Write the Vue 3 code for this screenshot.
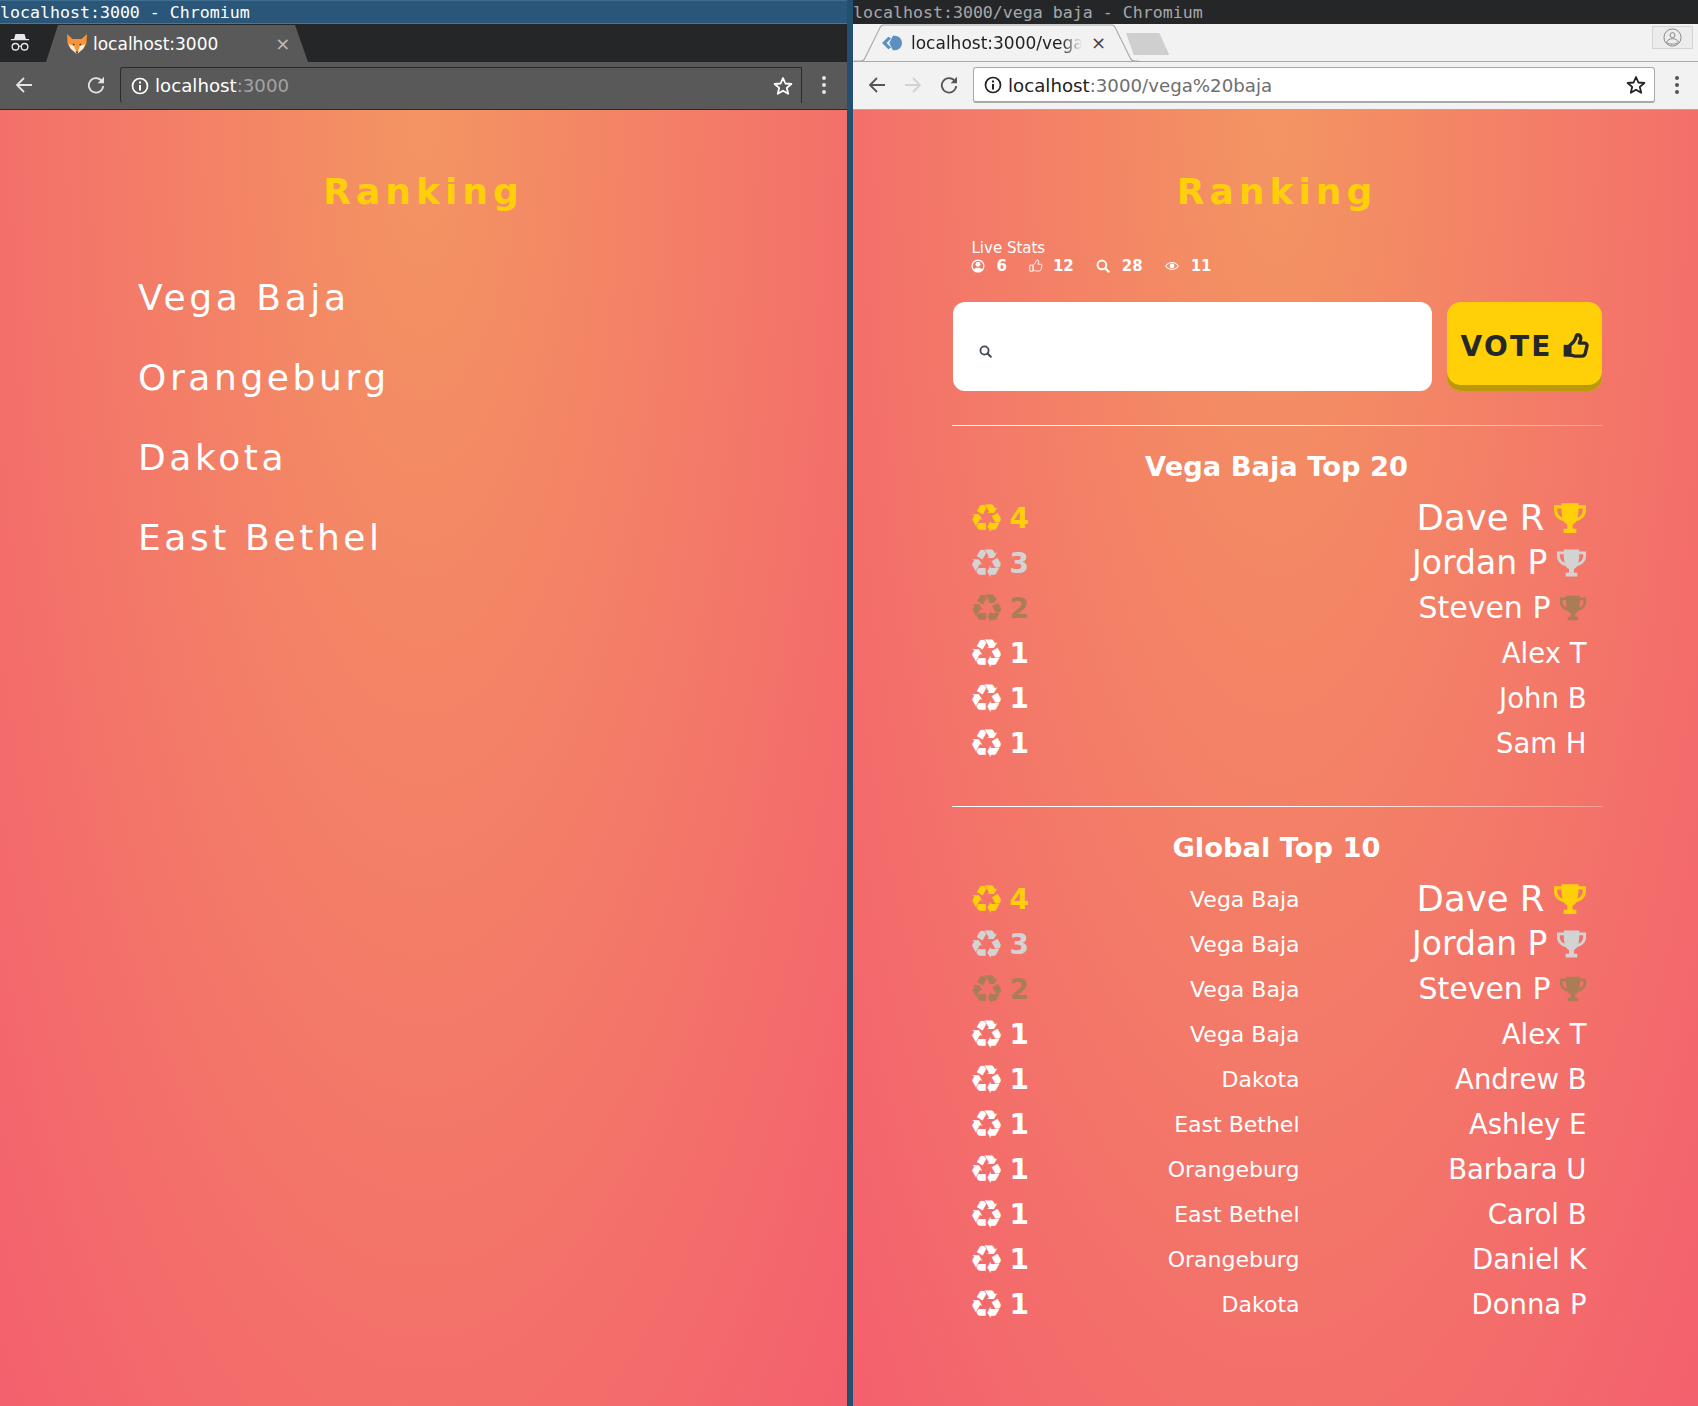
<template>
  <div class="screen">
    <svg class="defs" width="0" height="0">
      <defs>
        <symbol id="trophy" viewBox="0 0 32 28">
          <path fill-rule="evenodd" d="M8 0h16v2h7v5c0 5-4 9-9 10-1 1.500-2 2.500-3.500 3.200V24H22v4H10v-4h3.500v-3.800C12 19.500 11 18.500 10 17 5 16 1 12 1 7V2h7zM4 5v2c0 3 2 5.500 5 6.700C8.400 11.500 8 8.500 8 5zm24 0h-4c0 3.500-.4 6.500-1 8.700 3-1.200 5-3.700 5-6.700z" />
        </symbol>
        <symbol id="thumb" viewBox="0 0 24 24">
          <path fill="none" stroke="currentColor" stroke-linejoin="round" d="M7 11c2-1.500 4-3.500 5-6 .5-1.500.5-3.500 2-3.500 2 0 3 2 2.500 4l-1 3.500h4.500c1.500 0 2.500 1.200 2.200 2.500l-1.500 6.500c-.4 1.600-1.400 2.500-3 2.500h-6c-2 0-3-1-4.700-1z" />
          <path d="M1.500 10.500H7V21H1.500z" />
        </symbol>
        <symbol id="lens" viewBox="0 0 16 16">
          <circle cx="6.800" cy="6.800" r="5" fill="none" stroke="currentColor" stroke-width="2.200" />
          <path d="M10.500 10.500l4 4" stroke="currentColor" stroke-width="2.400" stroke-linecap="round" />
        </symbol>
        <symbol id="star" viewBox="0 0 20 20">
          <path fill="none" stroke="currentColor" stroke-width="1.800" stroke-linejoin="round" d="M10 2l2.400 5.500 6 .5-4.600 3.900 1.400 5.900L10 14.700 4.800 17.800l1.400-5.900L1.600 8l6-.5z" />
        </symbol>
        <symbol id="info" viewBox="0 0 18 18">
          <circle cx="9" cy="9" r="7.500" fill="none" stroke="currentColor" stroke-width="1.700" />
          <path fill="currentColor" d="M8 8h2v5.500H8zM8 4.500h2v2H8z" />
        </symbol>
        <symbol id="arrow" viewBox="0 0 18 18">
          <path fill="none" stroke="currentColor" stroke-width="1.800" d="M17 9H2M9 2 2 9l7 7" />
        </symbol>
        <symbol id="reload" viewBox="0 0 18 18">
          <path fill="none" stroke="currentColor" stroke-width="1.800" d="M14.800 5A7.200 7.200 0 1 0 16.200 10" />
          <path fill="currentColor" d="M17 .8v6.400h-6.400z" />
        </symbol>
      </defs>
    </svg>

    <section class="window dark">
      <div class="title-bar blue">localhost:3000 - Chromium</div>
      <div class="tab-strip">
        <svg class="incognito" viewBox="0 0 22 24">
          <path fill="#e6e6e6" d="M6 1h10l1.500 5.500H21v1.500H1V6.500h3.500z" />
          <circle cx="6" cy="15" r="3.600" fill="none" stroke="#e6e6e6" stroke-width="1.500" />
          <circle cx="16" cy="15" r="3.600" fill="none" stroke="#e6e6e6" stroke-width="1.500" />
          <path d="M9.500 14.500h3" stroke="#e6e6e6" stroke-width="1.300" />
        </svg>
        <div class="tab tab-dark">
          <svg class="favicon" viewBox="0 0 22 22">
            <path fill="#f7933a" d="M1 1l5.500 5h9L21 1l-.5 9-2.500 5-7 6-7-6-2.500-5z" />
            <path fill="#fdeeda" d="M2.500 11l5.500 2 3 8-6-5zM19.500 11 14 13l-3 8 6-5z" />
            <path fill="#40302a" d="M9.500 18.500h3L11 21zM6.500 10.500l2.500 1-1.500 1zM15.500 10.500l-2.500 1 1.500 1z" />
          </svg>
          <span class="tab-title">localhost:3000</span>
          <span class="tab-close">×</span>
        </div>
      </div>
      <div class="toolbar">
        <svg class="tool-icon"><use href="#arrow" /></svg>
        <span class="tool-gap"></span>
        <svg class="tool-icon"><use href="#reload" /></svg>
        <div class="omnibox">
          <svg class="info-icon"><use href="#info" /></svg>
          <span class="host">localhost<span class="rest">:3000</span></span>
          <svg class="star-icon"><use href="#star" /></svg>
        </div>
        <div class="dots"><i></i><i></i><i></i></div>
      </div>
      <main class="page">
        <h1 class="ranking">Ranking</h1>
        <ul class="cities">
          <li v-for="city in cities" :key="city">{{ city }}</li>
        </ul>
      </main>
    </section>

    <div class="divider"></div>

    <section class="window light">
      <div class="title-bar black">localhost:3000/vega baja - Chromium</div>
      <div class="tab-strip">
        <div class="tab tab-light">
          <svg class="tab-outline" viewBox="0 0 260 38" preserveAspectRatio="none">
            <path fill="#f2f2f2" stroke="#a9a9a9" d="M0 37h6Q9 37 10 34L24 3q1-2 3-2h208q2 0 3 2l14 31q1 3 4 3h4" />
          </svg>
          <svg class="favicon small" viewBox="0 0 22 22">
            <path fill="#5b90c0" d="M0 11l7-7 3 2-5 5 5 5-3 2zM14 3a8 8 0 0 1 0 16h-2l-4-8 4-8z" />
          </svg>
          <span class="tab-title clipped">localhost:3000/vega</span>
          <span class="tab-close dark-x">×</span>
        </div>
        <span class="new-tab"></span>
        <span class="profile">
          <svg viewBox="0 0 20 20" fill="none" stroke="#777" stroke-width=".9">
            <circle cx="10" cy="10" r="9" />
            <circle cx="10" cy="7.500" r="2.600" />
            <path d="M3.800 15c1-2.500 3.500-3.800 6.200-3.800s5.200 1.300 6.200 3.800c-1 1.300-3.500 2-6.200 2s-5.200-.7-6.200-2z" />
          </svg>
        </span>
      </div>
      <div class="toolbar">
        <svg class="tool-icon"><use href="#arrow" /></svg>
        <svg class="tool-icon forward"><use href="#arrow" /></svg>
        <svg class="tool-icon"><use href="#reload" /></svg>
        <div class="omnibox">
          <svg class="info-icon"><use href="#info" /></svg>
          <span class="host">localhost<span class="rest">:3000/vega%20baja</span></span>
          <svg class="star-icon"><use href="#star" /></svg>
        </div>
        <div class="dots"><i></i><i></i><i></i></div>
      </div>
      <main class="page">
        <h1 class="ranking">Ranking</h1>
        <div class="board">
          <div class="stats">
            <div class="stats-label">Live Stats</div>
            <div class="stats-row">
              <span class="stat">
                <svg class="stat-icon" viewBox="0 0 16 16">
                  <circle cx="8" cy="8" r="6.800" fill="none" stroke="currentColor" stroke-width="1.400" />
                  <circle cx="8" cy="6" r="2.800" fill="currentColor" />
                  <path fill="currentColor" d="M2.800 12.500C4 10.500 6 10 8 10s4 .5 5.200 2.500C12 14.200 10 15 8 15s-4-.8-5.200-2.500z" />
                </svg>
                <b>6</b>
              </span>
              <span class="stat likes">
                <svg class="stat-icon thin"><use href="#thumb" /></svg>
                <b>12</b>
              </span>
              <span class="stat">
                <svg class="stat-icon"><use href="#lens" /></svg>
                <b>28</b>
              </span>
              <span class="stat">
                <svg class="stat-icon" viewBox="0 0 16 16">
                  <path fill="none" stroke="currentColor" stroke-width="1.300" d="M.8 8C2.800 5.300 5.300 4 8 4s5.200 1.300 7.200 4c-2 2.700-4.500 4-7.200 4S2.800 10.700.8 8z" />
                  <circle cx="8" cy="8" r="2.800" fill="currentColor" />
                </svg>
                <b>11</b>
              </span>
            </div>
          </div>

          <div class="search-row">
            <div class="search-box">
              <svg class="search-icon"><use href="#lens" /></svg>
            </div>
            <button class="vote-btn" type="button">
              VOTE
              <svg class="vote-thumb"><use href="#thumb" /></svg>
            </button>
          </div>

          <hr class="rule" />
          <h2 class="board-title">Vega Baja Top 20</h2>
          <div class="rows">
            <div v-for="row in localTop" :key="row.name" class="row" :class="row.medal">
              <span class="score">
                <span class="recycle">♻</span>
                <b>{{ row.score }}</b>
              </span>
              <span class="person">
                {{ row.name }}
                <svg v-if="row.medal" class="trophy"><use href="#trophy" /></svg>
              </span>
            </div>
          </div>

          <hr class="rule second" />
          <h2 class="board-title">Global Top 10</h2>
          <div class="rows">
            <div v-for="row in globalTop" :key="row.name" class="row" :class="row.medal">
              <span class="score">
                <span class="recycle">♻</span>
                <b>{{ row.score }}</b>
              </span>
              <span class="place">{{ row.city }}</span>
              <span class="person">
                {{ row.name }}
                <svg v-if="row.medal" class="trophy"><use href="#trophy" /></svg>
              </span>
            </div>
          </div>
        </div>
      </main>
    </section>
  </div>
</template>

<script setup>
const cities = ['Vega Baja', 'Orangeburg', 'Dakota', 'East Bethel']

const localTop = [
  { name: 'Dave R', score: 4, medal: 'gold' },
  { name: 'Jordan P', score: 3, medal: 'silver' },
  { name: 'Steven P', score: 2, medal: 'bronze' },
  { name: 'Alex T', score: 1 },
  { name: 'John B', score: 1 },
  { name: 'Sam H', score: 1 },
]

const globalTop = [
  { name: 'Dave R', score: 4, medal: 'gold', city: 'Vega Baja' },
  { name: 'Jordan P', score: 3, medal: 'silver', city: 'Vega Baja' },
  { name: 'Steven P', score: 2, medal: 'bronze', city: 'Vega Baja' },
  { name: 'Alex T', score: 1, city: 'Vega Baja' },
  { name: 'Andrew B', score: 1, city: 'Dakota' },
  { name: 'Ashley E', score: 1, city: 'East Bethel' },
  { name: 'Barbara U', score: 1, city: 'Orangeburg' },
  { name: 'Carol B', score: 1, city: 'East Bethel' },
  { name: 'Daniel K', score: 1, city: 'Orangeburg' },
  { name: 'Donna P', score: 1, city: 'Dakota' },
]
</script>

<style>
html, body {
  margin: 0;
  background: #24506f;
}
</style>

<style scoped>
.screen {
  display: flex;
  width: 1698px;
  height: 1406px;
  overflow: hidden;
  font-family: "DejaVu Sans", sans-serif;
  color: #fff;
}
.defs {
  position: absolute;
}
.window {
  display: flex;
  flex-direction: column;
  height: 100%;
}
.window.dark {
  width: 847px;
}
.window.light {
  width: 845px;
}
.divider {
  width: 6px;
  background: #24506f;
}

.title-bar {
  height: 24px;
  box-sizing: border-box;
  font-family: "DejaVu Sans Mono", monospace;
  font-size: 16.6px;
  line-height: 25px;
  white-space: nowrap;
}
.title-bar.blue {
  background: #2a5779;
  border-top: 1px solid #3f6d90;
  border-bottom: 1px solid #4a7797;
  line-height: 23px;
}
.title-bar.black {
  background: #252628;
  color: #a8a8a8;
}

.tab-strip {
  display: flex;
  align-items: flex-end;
  height: 38px;
  box-sizing: border-box;
}
.dark .tab-strip {
  background: #252628;
}
.light .tab-strip {
  background: #f2f2f2;
  border-bottom: 1px solid #a9a9a9;
}
.incognito {
  width: 20px;
  height: 24px;
  margin: 0 14px 6px 10px;
}
.tab {
  position: relative;
  display: flex;
  align-items: center;
  height: 37px;
  font-size: 17px;
}
.tab-dark {
  width: 267px;
  padding-left: 22px;
  box-sizing: border-box;
  background: #595959;
  clip-path: polygon(0 100%, 2px 100%, 14px 0, 251px 0, 264px 100%, 100% 100%);
}
.tab-light {
  width: 285px;
  height: 38px;
  flex: none;
  margin-left: 1px;
  margin-bottom: -1px;
  padding-left: 28px;
  box-sizing: border-box;
  color: #222;
}
.tab-outline {
  position: absolute;
  left: 0;
  top: 0;
  width: 100%;
  height: 100%;
}
.favicon {
  position: relative;
  width: 22px;
  height: 22px;
  margin-right: 5px;
  flex: none;
}
.favicon.small {
  width: 20px;
  height: 20px;
  margin-right: 9px;
}
.tab-title {
  position: relative;
  flex: none;
}
.tab-title.clipped {
  width: 171px;
  overflow: hidden;
  white-space: nowrap;
  -webkit-mask-image: linear-gradient(90deg, #000 88%, transparent);
  mask-image: linear-gradient(90deg, #000 88%, transparent);
}
.tab-close {
  position: relative;
  margin-left: 57px;
  font-size: 18px;
  line-height: 1;
  color: #bdbdbd;
}
.tab-close.dark-x {
  margin-left: 9px;
  color: #444;
}
.new-tab {
  position: relative;
  width: 44px;
  height: 22px;
  margin: 0 0 6px -14px;
  background: #cfcfcf;
  clip-path: polygon(1px 0, 78% 0, 100% 96%, 98% 100%, 20% 100%);
  flex: none;
}
.profile {
  display: flex;
  align-items: center;
  justify-content: center;
  width: 39px;
  height: 21px;
  margin: 0 5px 12px auto;
  border: 1px solid #d4d4d4;
  background: #ececec;
}
.profile svg {
  width: 19px;
  height: 19px;
}

.toolbar {
  display: flex;
  align-items: center;
  height: 48px;
  box-sizing: border-box;
  padding: 0 0 1px 15px;
  border-bottom: 1px solid #aaa;
}
.dark .toolbar {
  background: #595959;
  border-bottom-color: #2a2a2a;
  color: #e3e3e3;
}
.light .toolbar {
  background: #f2f2f2;
  color: #555;
}
.tool-icon {
  width: 18px;
  height: 18px;
  flex: none;
  margin-right: 18px;
}
.tool-icon.forward {
  transform: scaleX(-1);
  color: #d2d2d2;
}
.tool-gap {
  width: 18px;
  margin-right: 18px;
}
.omnibox {
  display: flex;
  align-items: center;
  flex: none;
  width: 682px;
  height: 36px;
  box-sizing: border-box;
  margin-left: -3px;
  padding: 0 8px 0 10px;
  font-size: 18.2px;
}
.dark .omnibox {
  border-top: 1px solid #2b2b2b;
  border-left: 1px solid #2b2b2b;
  border-right: 1px solid #2b2b2b;
  border-radius: 3px 0 0 3px;
  color: #fff;
}
.light .omnibox {
  background: #fff;
  border: 1px solid #a9a9a9;
  border-bottom-width: 2px;
  border-radius: 3px;
  padding-top: 1px;
  color: #222;
}
.info-icon {
  width: 18px;
  height: 18px;
  margin-right: 6px;
  flex: none;
}
.rest {
  color: #a3a3a3;
}
.light .rest {
  color: #6e6e6e;
}
.star-icon {
  width: 20px;
  height: 20px;
  margin-left: auto;
}
.dots {
  display: flex;
  flex-direction: column;
  gap: 3px;
  margin-left: 20px;
}
.dots i {
  width: 4px;
  height: 4px;
  border-radius: 50%;
  background: currentColor;
}

.page {
  flex: 1;
  background: radial-gradient(ellipse at top, #f39562, #f3606e);
  text-align: center;
  overflow: hidden;
}
.ranking {
  margin: 60px 0 0;
  font-size: 36px;
  line-height: 44px;
  font-weight: 700;
  letter-spacing: 5px;
  color: #ffcf09;
}
.light .ranking {
  padding-left: 3px;
}
.cities {
  margin: 44px 0 0;
  padding: 0 0 0 138px;
  list-style: none;
  text-align: left;
  font-size: 36px;
  line-height: 80px;
  letter-spacing: 3.600px;
}

.board {
  width: 650px;
  margin: 0 auto;
  padding-left: 2px;
  text-align: left;
}
.stats {
  padding: 25px 0 0 19px;
  height: 88px;
  box-sizing: border-box;
}
.stats-label {
  padding-left: 1px;
  font-size: 15px;
  line-height: 18px;
}
.stats-row {
  display: flex;
  font-size: 15px;
  line-height: 18px;
}
.stat {
  display: flex;
  align-items: center;
  gap: 12px;
  margin-right: 22px;
}
.stat.likes {
  gap: 10px;
}
.stat b {
  font-weight: 700;
}
.stat-icon {
  width: 14px;
  height: 14px;
}
.stat-icon.thin {
  fill: none;
  stroke: currentColor;
  stroke-width: 1.500;
}
.search-row {
  display: flex;
  justify-content: space-between;
}
.search-box {
  display: flex;
  align-items: center;
  width: 479px;
  height: 89px;
  margin-left: 1px;
  padding: 10px 0 0 26px;
  box-sizing: border-box;
  border-radius: 12px;
  background: #fff;
  color: #3f4650;
}
.search-icon {
  width: 13px;
  height: 13px;
}
.vote-btn {
  display: flex;
  align-items: center;
  gap: 9px;
  width: 155px;
  height: 89px;
  padding: 0 0 0 14px;
  border: 0;
  border-radius: 14px;
  background: #ffd007;
  box-shadow: inset 0 -6px 0 #bb990c;
  font-family: inherit;
  font-size: 28px;
  font-weight: 700;
  letter-spacing: 2.200px;
  color: #25282b;
}
.vote-thumb {
  width: 27px;
  height: 27px;
  fill: currentColor;
  stroke-width: 3;
}
.rule {
  height: 1px;
  margin: 34px 0 0;
  border: 0;
  background: linear-gradient(90deg, #fff 0%, #fff 50%, rgba(255, 255, 255, .3) 100%);
}
.rule.second {
  margin-top: 40px;
}
.board-title {
  margin: 21px 0 0;
  text-align: center;
  font-size: 27.3px;
  line-height: 40px;
  font-weight: 700;
}
.rows {
  display: flex;
  flex-direction: column;
  margin-top: 9px;
  padding: 0 15px 0 21px;
}
.row {
  display: grid;
  grid-template-columns: 1fr 330px;
  align-items: center;
  height: 45px;
}
.rows:last-child .row {
  grid-template-columns: 190px 137px 1fr;
}
.score {
  display: flex;
  align-items: center;
  gap: 9px;
  font-size: 28px;
}
.score b {
  font-weight: 700;
}
.recycle {
  display: flex;
  justify-content: center;
  width: 28px;
  height: 28px;
  font-size: 39px;
  line-height: 28px;
}
.place {
  text-align: right;
  font-size: 22px;
  white-space: nowrap;
}
.person {
  display: flex;
  align-items: center;
  justify-content: flex-end;
  gap: 8px;
  padding-bottom: 2px;
  font-size: 27.5px;
}
.trophy {
  fill: currentColor;
  flex: none;
}
.row.gold .score,
.row.gold .trophy {
  color: #ffcf09;
}
.row.silver .score,
.row.silver .trophy {
  color: #d3d3d3;
}
.row.bronze .score,
.row.bronze .trophy {
  color: #ab7d57;
}
.row.gold .person {
  font-size: 35.5px;
}
.row.gold .trophy {
  width: 34px;
  height: 30px;
}
.row.silver .person {
  font-size: 33px;
}
.row.silver .trophy {
  width: 31px;
  height: 28px;
}
.row.bronze .person {
  font-size: 30px;
}
.row.bronze .trophy {
  width: 28px;
  height: 26px;
}
</style>
